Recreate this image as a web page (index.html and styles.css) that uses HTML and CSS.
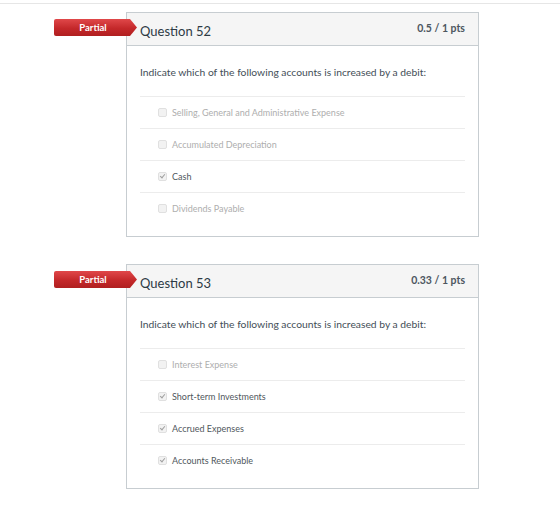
FILE: index.html
```html
<!DOCTYPE html>
<html>

<head>
    <link rel="stylesheet" href="styles.css">
</head>

<body>
    <div class="top-rule"></div>

    <div class="quiz">
        <div class="question">
            <div class="flag">Partial</div>
            <div class="q-header">
                <span class="q-name">Question 52</span>
                <span class="q-points">0.5 / 1 pts</span>
            </div>
            <div class="q-body">
                <p class="q-text">Indicate which of the following accounts is increased by a debit:</p>
                <ul class="answers">
                    <li class="answer"><span class="box"></span>Selling, General and Administrative Expense</li>
                    <li class="answer"><span class="box"></span>Accumulated Depreciation</li>
                    <li class="answer selected"><span class="box"></span>Cash</li>
                    <li class="answer"><span class="box"></span>Dividends Payable</li>
                </ul>
            </div>
        </div>

        <div class="question">
            <div class="flag">Partial</div>
            <div class="q-header">
                <span class="q-name">Question 53</span>
                <span class="q-points">0.33 / 1 pts</span>
            </div>
            <div class="q-body">
                <p class="q-text">Indicate which of the following accounts is increased by a debit:</p>
                <ul class="answers">
                    <li class="answer"><span class="box"></span>Interest Expense</li>
                    <li class="answer selected"><span class="box"></span>Short-term Investments</li>
                    <li class="answer selected"><span class="box"></span>Accrued Expenses</li>
                    <li class="answer selected"><span class="box"></span>Accounts Receivable</li>
                </ul>
            </div>
        </div>
    </div>
</body>

</html>
```

FILE: styles.css
```css
body {
    margin: 0;
    font-family: Lato, "Open Sans", sans-serif;
    color: #2d3b45;
    background: #fff;
}

.top-rule {
    height: 3px;
    border-bottom: 1px solid #e6e6e6;
}

.quiz {
    padding-top: 8px;
    padding-left: 126px;
    width: 353px;
    display: flex;
    flex-direction: column;
    gap: 27px;
}

.question {
    position: relative;
    border: 1px solid #c7cdd1;
}

/* red "Partial" ribbon hanging off the left edge */
.flag {
    position: absolute;
    top: 6px;
    left: -73px;
    width: 83px;
    height: 17px;
    line-height: 17px;
    padding-right: 5px;
    box-sizing: border-box;
    text-align: center;
    font-size: 9.5px;
    font-weight: bold;
    color: #fff;
    background: linear-gradient(#e0484a, #c4282a 55%, #b01f20);
    clip-path: polygon(0 0, 76px 0, 100% 50%, 76px 100%, 0 100%);
    border-radius: 2px 0 0 2px;
}

.q-header {
    height: 32px;
    background: #f5f5f5;
    border-bottom: 1px solid #c7cdd1;
    display: flex;
    justify-content: space-between;
    padding: 0 13px;
}

.q-name {
    font-size: 13px;
    padding-top: 10px;
    color: #2d3b45;
}

.q-points {
    font-size: 10.5px;
    font-weight: bold;
    color: #4c5660;
    padding-top: 9px;
}

.q-body {
    padding: 19px 13px 12px;
}

.q-text {
    margin: 0;
    font-size: 10.3px;
    line-height: 14px;
    color: #434e57;
}

.answers {
    list-style: none;
    margin: 17px 0 0;
    padding: 0;
    border-top: 1px solid #ececec;
}

.answer {
    height: 31px;
    display: flex;
    align-items: center;
    padding-left: 18px;
    font-size: 9px;
    color: #aeaeae;
    border-bottom: 1px solid #ececec;
}

.answer:last-child {
    border-bottom: none;
}

.answer.selected {
    color: #50575d;
}

.box {
    width: 7px;
    height: 7px;
    margin-right: 5px;
    border: 1px solid #e0e0e0;
    border-radius: 2px;
    background: #f2f2f2;
    position: relative;
}

.selected .box::after {
    content: "";
    position: absolute;
    left: 2px;
    top: 0px;
    width: 2px;
    height: 4px;
    border: solid #a0a0a0;
    border-width: 0 1px 1px 0;
    transform: rotate(40deg);
}
```
